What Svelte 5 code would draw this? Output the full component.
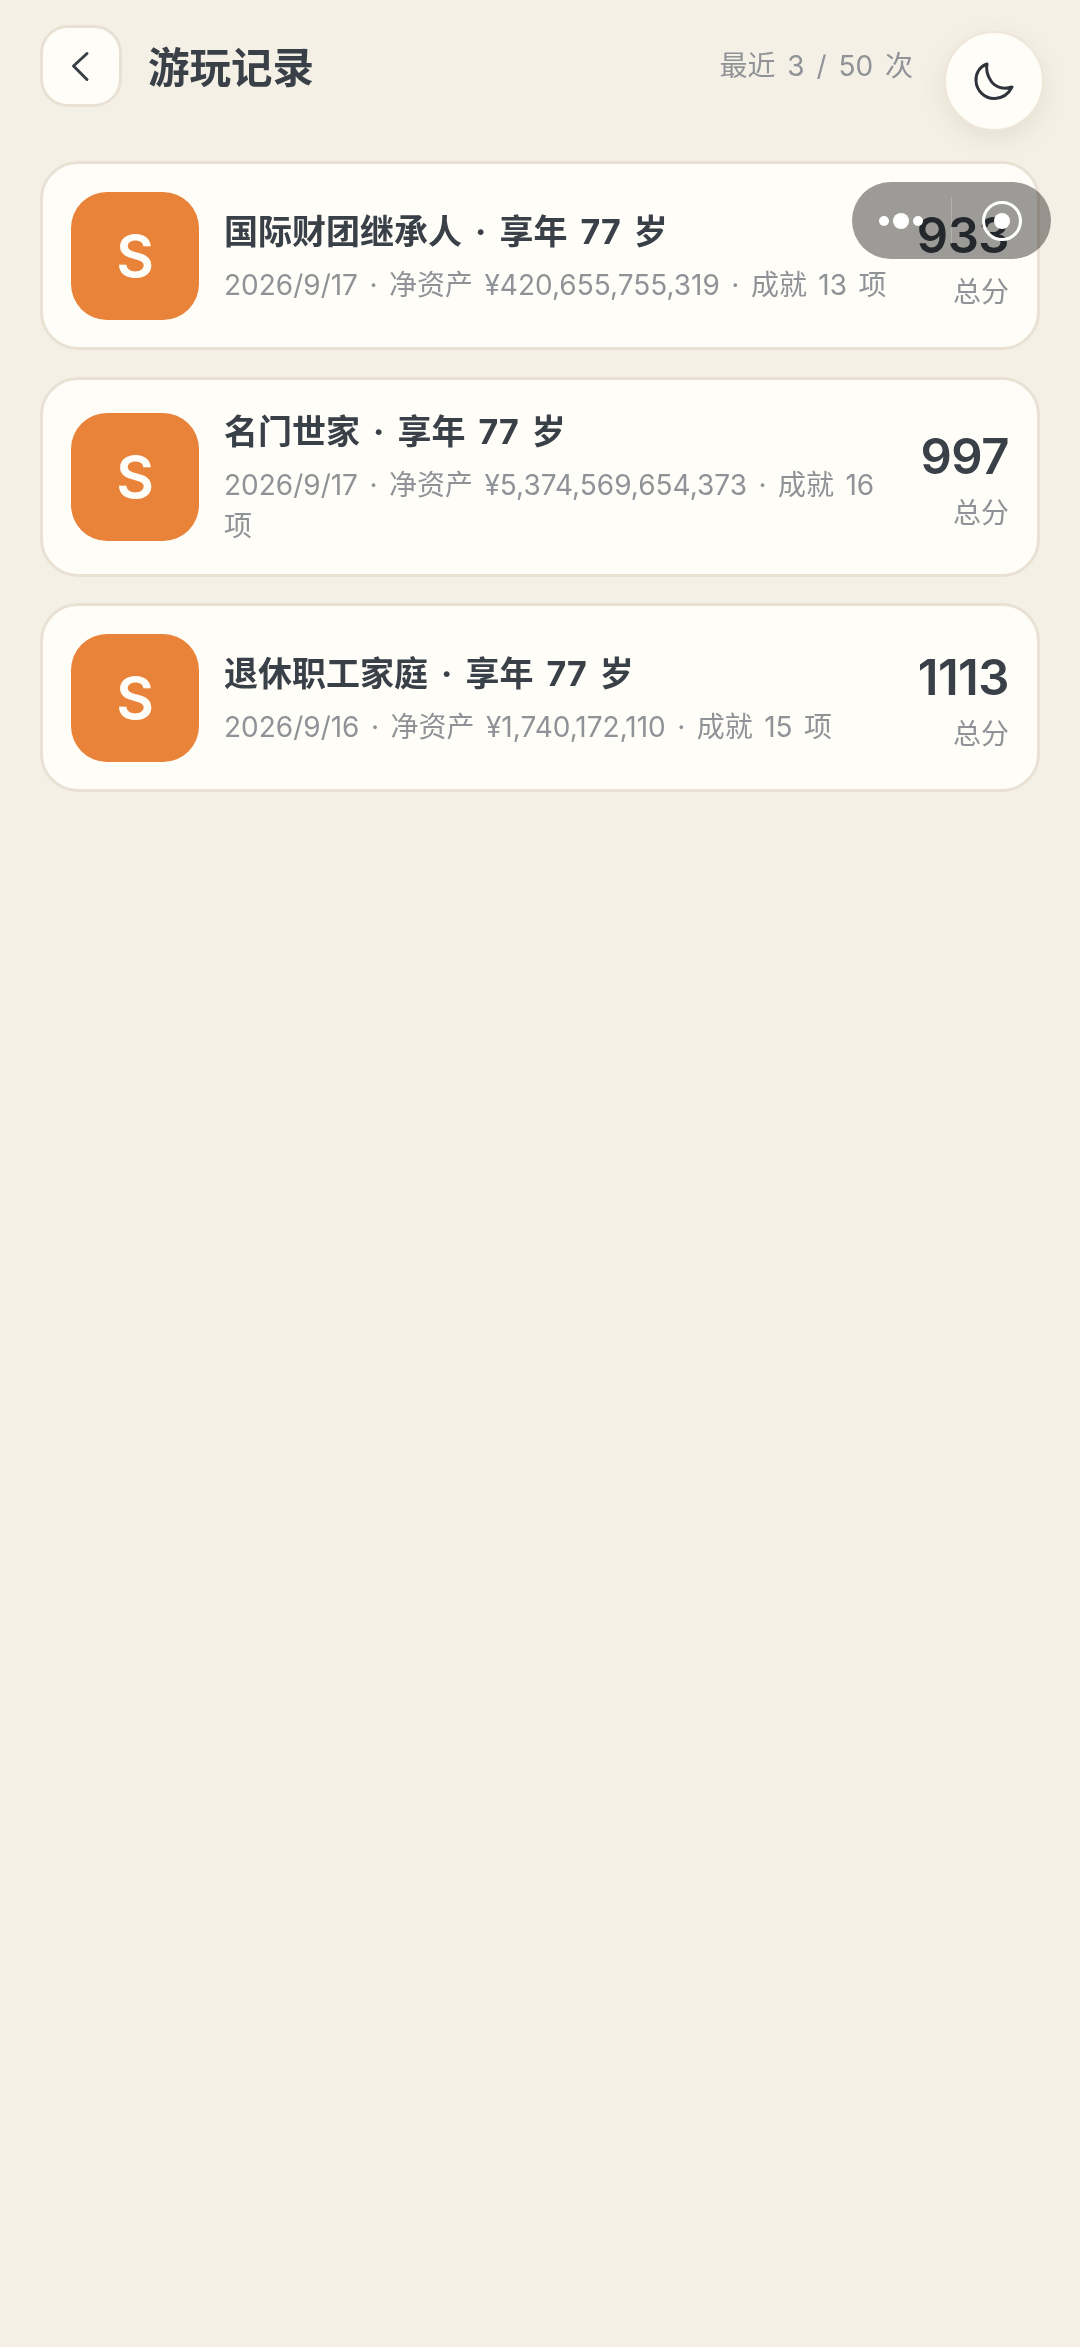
<script>
	const records = [
		{ title: '国际财团继承人 · 享年 77 岁', date: '2026/9/17', worth: '¥420,655,755,319', count: 13, score: 933 },
		{ title: '名门世家 · 享年 77 岁', date: '2026/9/17', worth: '¥5,374,569,654,373', count: 16, score: 997 },
		{ title: '退休职工家庭 · 享年 77 岁', date: '2026/9/16', worth: '¥1,740,172,110', count: 15, score: 1113 }
	];
</script>

<div class="page">
	<header>
		<button class="back" aria-label="返回">
			<svg width="30" height="34" viewBox="0 0 30 34" fill="none">
				<path d="M21 4.500 L7.500 17 L21 30.500" stroke="#3a4048" stroke-width="3" stroke-linecap="round" stroke-linejoin="round" />
			</svg>
		</button>
		<h1>游玩记录</h1>
		<span class="meta">最近 3 / 50 次</span>
	</header>

	<main>
		{#each records as r}
			<div class="card">
				<div class="grade">S</div>
				<div class="info">
					<div class="title">{r.title}</div>
					<div class="sub">{r.date} · 净资产 {r.worth} · 成就 {r.count} 项</div>
				</div>
				<div class="total">
					<div class="score">{r.score}</div>
					<div class="label">总分</div>
				</div>
			</div>
		{/each}
	</main>

	<button class="theme" aria-label="切换主题">
		<svg width="42" height="42" viewBox="0 0 42 42" fill="none">
			<path d="M14 4 C6 7 2.500 14 3 21 C3.500 31 12 39 22 38.500 C30 38 36 33 39 27 C30 30 22 27 18 21 C14 15 13 9 14 4 Z" stroke="#2f343c" stroke-width="3" stroke-linejoin="round" />
		</svg>
	</button>

	<div class="capsule"></div>
	<div class="capsule-icons">
		<span class="dot small"></span>
		<span class="dot big"></span>
		<span class="dot small"></span>
		<span class="divider"></span>
		<span class="ring"><span class="core"></span></span>
	</div>
</div>

<style>
	:global(body) {
		margin: 0;
		background: #f5f0e6;
	}

	.page {
		position: relative;
		min-height: 2347px;
		background: #f5f0e6;
		padding: 25px 40px 0;
		box-sizing: border-box;
		font-family: Inter, 'Noto Sans CJK SC', sans-serif;
		color: #3a4048;
	}

	header {
		display: flex;
		align-items: center;
		height: 82px;
		margin-bottom: 54px;
	}

	.back {
		width: 82px;
		height: 82px;
		padding: 0;
		display: flex;
		align-items: center;
		justify-content: center;
		box-sizing: border-box;
		background: #fffdf8;
		border: 3px solid #e9e2d4;
		border-radius: 28px;
	}

	h1 {
		margin: 6px 0 0 26px;
		font-size: 41.5px;
		font-weight: 700;
		line-height: 1.3;
		flex: 1;
	}

	.meta {
		margin-right: 127px;
		margin-top: -4px;
		font-size: 28px;
		word-spacing: 4px;
		color: #8f9297;
	}

	main {
		display: flex;
		flex-direction: column;
		gap: 26.5px;
	}

	.card {
		display: flex;
		align-items: center;
		gap: 25px;
		padding: 27.5px 28px;
		background: #fffdf8;
		border: 3px solid #e9e2d4;
		border-radius: 38px;
	}

	.grade {
		flex: none;
		width: 128px;
		height: 128px;
		display: flex;
		align-items: center;
		justify-content: center;
		background: #e9833a;
		border-radius: 36px;
		color: #fffdf8;
		font-size: 58px;
		font-weight: 600;
	}

	.info {
		flex: 1;
		min-width: 0;
		margin-top: 1px;
		margin-bottom: -1px;
	}

	.title {
		font-size: 34px;
		font-weight: 700;
		line-height: 48px;
		margin-bottom: 9px;
		word-spacing: 5px;
	}

	.sub {
		font-size: 28px;
		line-height: 41px;
		word-spacing: 3.6px;
		color: #8f9297;
	}

	.total {
		flex: none;
		text-align: right;
		margin-top: 3px;
		margin-bottom: -3px;
	}

	.score {
		font-size: 49px;
		font-weight: 600;
		line-height: 58px;
		letter-spacing: -0.5px;
	}

	.label {
		margin-top: 8px;
		font-size: 28px;
		line-height: 38px;
		color: #8f9297;
	}

	.theme {
		position: absolute;
		top: 31px;
		left: 944px;
		width: 100px;
		height: 100px;
		padding: 0;
		display: flex;
		align-items: center;
		justify-content: center;
		background: #fffdf8;
		border: 2px solid #eee7d9;
		border-radius: 50%;
		box-shadow: 0 8px 24px rgba(120, 100, 70, 0.12);
		box-sizing: border-box;
	}

	.capsule,
	.capsule-icons {
		position: absolute;
		top: 182px;
		left: 852px;
		width: 199px;
		height: 77px;
		border-radius: 39px;
	}

	.capsule {
		background: #9d9c9b;
		mix-blend-mode: multiply;
	}

	.dot {
		position: absolute;
		background: #fff;
		border-radius: 50%;
	}

	.dot.small {
		width: 10px;
		height: 10px;
		top: 34px;
	}

	.dot.small:nth-child(1) {
		left: 27px;
	}

	.dot.small:nth-child(3) {
		left: 61px;
	}

	.dot.big {
		width: 16px;
		height: 16px;
		top: 31px;
		left: 41px;
	}

	.divider {
		position: absolute;
		left: 99px;
		top: 15px;
		width: 1px;
		height: 47px;
		background: rgba(255, 255, 255, 0.22);
	}

	.ring {
		position: absolute;
		left: 130px;
		top: 19px;
		width: 40px;
		height: 40px;
		box-sizing: border-box;
		border: 3px solid #fff;
		border-radius: 50%;
	}

	.core {
		position: absolute;
		left: 9px;
		top: 9px;
		width: 16px;
		height: 16px;
		background: #fff;
		border-radius: 50%;
	}
</style>
